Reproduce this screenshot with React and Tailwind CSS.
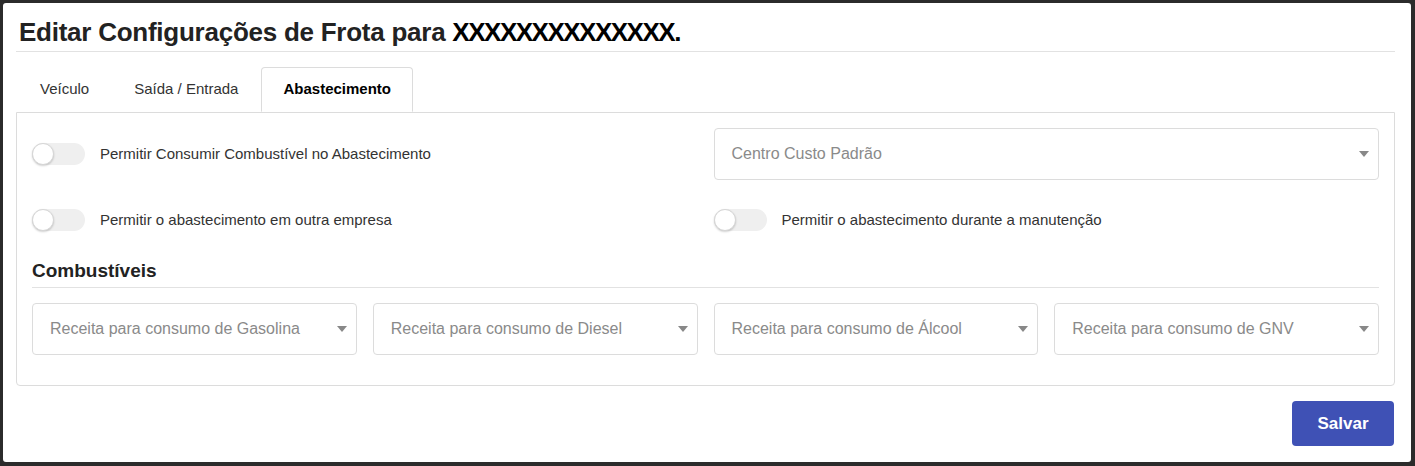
import React from "react";

const Toggle = () => (
  <span className="relative inline-block w-[53px] h-[22px] rounded-full bg-[#efefef] shrink-0">
    {/* knob */}
    <span className="absolute left-0 top-0 w-[22px] h-[22px] rounded-full bg-white border border-[#d6d6d6] shadow-[0_1px_2px_rgba(0,0,0,0.18)]" />
  </span>
);

const Select = ({ placeholder }) => (
  <div className="flex items-center justify-between h-[52px] border border-[#dcdcdc] rounded-[4px] pl-[17px] pr-[9px] text-[16px] text-[#8a8a8a]">
    <span>{placeholder}</span>
    <svg width="10" height="6" viewBox="0 0 10 6">
      <path d="M0 0h10L5 6z" fill="#888" />
    </svg>
  </div>
);

const SwitchRow = ({ label }) => (
  <label className="flex items-center gap-[15px] text-[15px] text-[#333]">
    <Toggle />
    <span>{label}</span>
  </label>
);

const tabs = ["Veículo", "Saída / Entrada", "Abastecimento"];

const App = () => {
  const active = 2;

  return (
    <div
      className="h-[466px] bg-[#2b2b2b] pt-[3px] pl-[3px] pr-[4px] pb-[4px]"
      style={{ fontFamily: '"Liberation Sans", Arial, sans-serif' }}
    >
      <div className="h-full bg-white rounded-[3px] pt-[14px] pl-[13px] pr-[16px] pb-[16px] flex flex-col">
        {/* Title */}
        <div className="border-b border-[#e2e2e2] pb-[4px] pl-[3px]">
          <h1 className="text-[26px] leading-[30px] font-bold text-[#222] tracking-[-0.25px]">
            Editar Configurações de Frota para{" "}
            <span className="text-black tracking-[-1.5px]">XXXXXXXXXXXXXX.</span>
          </h1>
        </div>

        {/* Tabs */}
        <div className="mt-[15px] flex pl-[2px]">
          {tabs.map((t, i) => (
            <div
              key={t}
              className={
                i === active
                  ? "h-[45px] px-[21px] mr-px flex items-center text-[15px] font-bold text-black bg-white border border-[#dcdcdc] border-b-white rounded-t-[4px] -mb-px relative z-10"
                  : "h-[45px] px-[21px] mr-px flex items-center text-[15px] text-[#333] border border-transparent"
              }
            >
              {t}
            </div>
          ))}
        </div>

        {/* Panel */}
        <div className="border border-[#dcdcdc] rounded-b-[4px] pt-[15px] px-[15px] pb-[30px]">
          <div className="grid grid-cols-2 gap-x-[16px]">
            <div className="h-[52px] flex items-center">
              <SwitchRow label="Permitir Consumir Combustível no Abastecimento" />
            </div>
            <Select placeholder="Centro Custo Padrão" />
          </div>

          <div className="grid grid-cols-2 gap-x-[16px] mt-[29px]">
            <SwitchRow label="Permitir o abastecimento em outra empresa" />
            <SwitchRow label="Permitir o abastecimento durante a manutenção" />
          </div>

          <h2 className="mt-[27px] text-[19px] leading-[23px] font-bold text-[#222] pb-[5px] border-b border-[#e2e2e2]">
            Combustíveis
          </h2>

          <div className="grid grid-cols-4 gap-x-[16px] mt-[15px]">
            <Select placeholder="Receita para consumo de Gasolina" />
            <Select placeholder="Receita para consumo de Diesel" />
            <Select placeholder="Receita para consumo de Álcool" />
            <Select placeholder="Receita para consumo de GNV" />
          </div>
        </div>

        {/* Footer */}
        <div className="mt-auto flex justify-end pr-px">
          <button className="w-[102px] h-[45px] rounded-[4px] bg-[#3f51b5] text-white text-[17px] font-bold">
            Salvar
          </button>
        </div>
      </div>
    </div>
  );
};

export default App;
